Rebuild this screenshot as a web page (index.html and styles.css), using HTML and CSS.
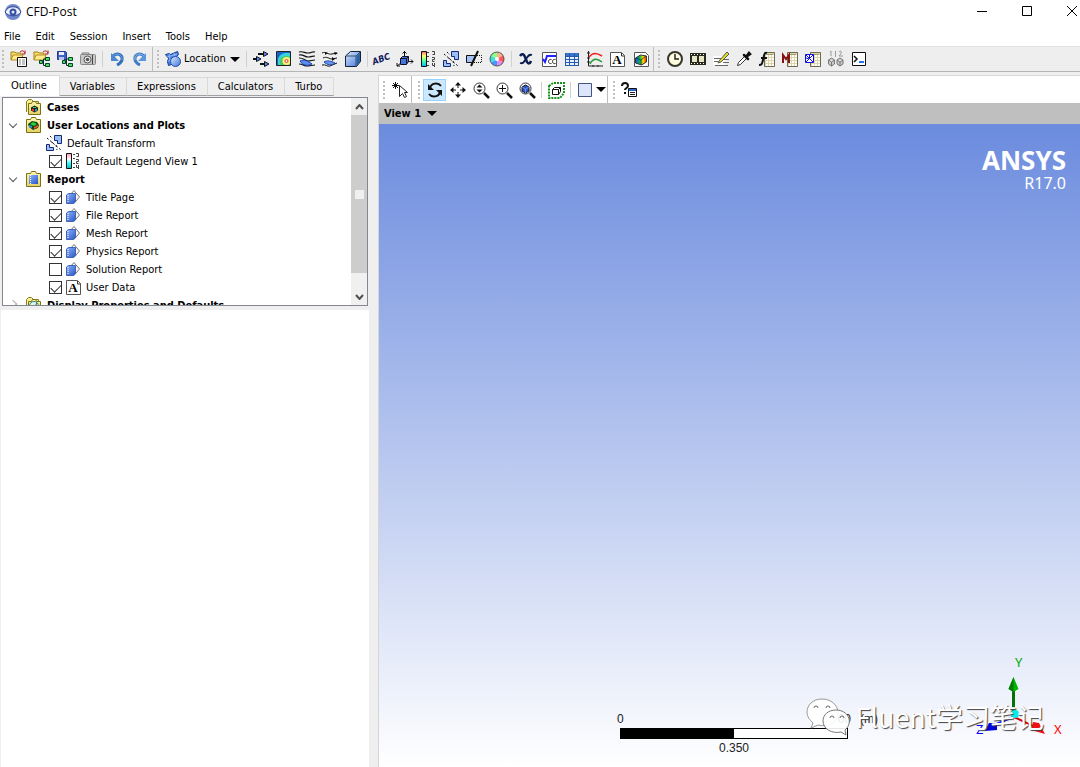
FILE: index.html
```html
<!DOCTYPE html>
<html lang="en">
<head>
	<meta charset="UTF-8">
	<title>CFD-Post</title>
	<link rel="stylesheet" href="styles.css">
</head>
<body>
<!-- shared icons -->
<svg class="sprite">
	<defs>
		<linearGradient id="gBlue" x1="0" y1="0" x2="1" y2="1"><stop offset="0" stop-color="#dcebff"/><stop offset="1" stop-color="#3f73d8"/></linearGradient>
		<linearGradient id="gBook" x1="0" y1="0" x2="1" y2="1"><stop offset="0" stop-color="#8fb4ff"/><stop offset="1" stop-color="#2a55c4"/></linearGradient>
		<linearGradient id="gFolder" x1="0" y1="0" x2="0" y2="1"><stop offset="0" stop-color="#fff9b0"/><stop offset="1" stop-color="#e2d06a"/></linearGradient>
		<linearGradient id="gBar" x1="0" y1="0" x2="0" y2="1"><stop offset="0" stop-color="#f66"/><stop offset=".3" stop-color="#ff7"/><stop offset=".6" stop-color="#5f9"/><stop offset="1" stop-color="#0bf"/></linearGradient>
		<linearGradient id="gBar2" x1="0" y1="0" x2="0" y2="1"><stop offset="0" stop-color="#f9a"/><stop offset=".4" stop-color="#fff"/><stop offset=".6" stop-color="#4ff"/><stop offset="1" stop-color="#0bb"/></linearGradient>
		<linearGradient id="gRain" x1="0" y1="0" x2="1" y2="0"><stop offset="0" stop-color="#24f"/><stop offset=".4" stop-color="#0b4"/><stop offset=".7" stop-color="#fd0"/><stop offset="1" stop-color="#e20"/></linearGradient>
	</defs>
	<symbol id="openfolder" viewBox="0 0 18 18">
		<path d="M1 10V2h4l1 1h5v2" fill="#f7dc6f" stroke="#a8801a"/><path d="M1 10l2-5h10l-2 5z" fill="#ffeb8e" stroke="#b58b1e"/>
		<path d="M10 2c2-2 4-1 5 1M15 .5V4h-3" fill="none" stroke="#b01818"/>
	</symbol>
	<symbol id="nodes" viewBox="0 0 18 18">
		<path d="M8 12h3M10.500 12V9h2M10.500 12v3.500h3" fill="none" stroke="#222"/>
		<path d="M6.500 10.500h3v3h-3zM12.500 7.500h4v3h-4zM12.500 13.500h4v3h-4z" fill="#4fe05a" stroke="#043"/>
	</symbol>
	<symbol id="load" viewBox="0 0 18 18"><use href="#openfolder"/><path d="M7.500 7.500h9v9h-9z" fill="#fff" stroke="#111"/><path d="M9 10h2m1 0h3m-6 2h2m1 0h3m-6 2h2m1 0h3" stroke="#888"/></symbol>
	<symbol id="loadstate" viewBox="0 0 18 18"><use href="#openfolder"/><use href="#nodes"/></symbol>
	<symbol id="save" viewBox="0 0 18 18"><path d="M1.500 1.500h8l1 1v7h-9z" fill="#3d62c4" stroke="#1d3b8c"/><path d="M3 2h5v3H3z" fill="#eef"/><path d="M3 7h5v3H3z" fill="#b8c8f0"/><use href="#nodes"/></symbol>
	<symbol id="camera" viewBox="0 0 18 18"><rect x="1.500" y="4.500" width="15" height="10" rx="1" fill="#c8c8c8" stroke="#888"/><path d="M3 4V3h7v1" stroke="#777" fill="#ddd"/><path d="M13.500 5v9" stroke="#444"/><circle cx="8.500" cy="9.500" r="3.500" fill="#eee" stroke="#555"/><circle cx="8.500" cy="9.500" r="1.800" fill="#555"/></symbol>
	<symbol id="undo" viewBox="0 0 18 18"><path d="M5 6c5-4 10-1 9 4-1 3-3 4-5 5" fill="none" stroke="#336fbd" stroke-width="3"/><path d="M5 6c5-4 10-1 9 4" fill="none" stroke="#6ca7e5"/><path d="M3 3v8h8z" fill="#4c88d2"/></symbol>
	<symbol id="redo" viewBox="0 0 18 18"><path d="M13 6C8 2 3 5 4 10c1 3 3 4 5 5" fill="none" stroke="#3f7cc8" stroke-width="3"/><path d="M13 6C8 2 3 5 4 10" fill="none" stroke="#8bbcf0"/><path d="M15 3v8H7z" fill="#5c96dc"/></symbol>
	<symbol id="location" viewBox="0 0 18 18"><path d="M1.500 4.500l4-1 1 1 7-3 1 3-2 2 1 6-9 3-1-4 1-3z" fill="#4a82e4" stroke="#123a9a"/><path d="M3 7l10-3M5 4l2 10M10 3l2 8M4 11l9-3" stroke="#a9ccff" stroke-width=".7"/><circle cx="11.500" cy="11.500" r="5" fill="url(#gBlue)" stroke="#1d49ac"/></symbol>
	<symbol id="vector" viewBox="0 0 18 18"><path d="M6 4h7M1 9h6M8 14h6" stroke="#111" stroke-width="2"/><path d="M11.500 1.500L16 4l-4.500 2.500zM4.500 6.500L9 9l-4.500 2.500zM12.500 11.500L17 14l-4.500 2.500z" fill="#58f" stroke="#111"/></symbol>
	<symbol id="contour" viewBox="0 0 18 18"><path d="M2 2h14v14H2z" fill="#1b66c4"/><path d="M3 16V9c1-4 5-6 8-6h5v13z" fill="#35d3dc"/><path d="M5 16v-6c1-3 4-4 6-4 4 0 5 2 5 5v5z" fill="#4cc95f"/><circle cx="11.500" cy="11" r="4" fill="#f9f07c"/><circle cx="11.500" cy="11" r="1.500" fill="#fff" stroke="#e33"/><path d="M1.500 1.500h14v14h-14z" fill="none" stroke="#222"/></symbol>
	<symbol id="stream" viewBox="0 0 18 18"><path d="M1 2c5-1 5 1 9 1s4-2 7-1M1 5c5-1 5 2 9 2s4-1 7-1M1 8c5 0 5 2 9 3 3 0 4-1 7-1M1 14c4 0 5 2 8 2s5-1 8-1" stroke="#111" fill="none" stroke-width="1.200"/><path d="M2 11c4-2 8 0 12 3-4 2-9 2-12-3z" fill="#5b8cf0" stroke="#1746aa"/></symbol>
	<symbol id="particle" viewBox="0 0 18 18"><path d="M1 3c4-2 6 2 10 1l5-1M2 8c4-2 6 1 9 1l5-1M1 15c4-1 5 2 8 1l7-3" stroke="#111" fill="none"/><path d="M4 2l3 1-3 2zM13 2l4 1-3 2zM11 7l3 2-3 2z" fill="#111"/><path d="M3 12c3-2 7-1 11 1-3 3-8 2-11-1z" fill="#6593f0" stroke="#1746aa"/></symbol>
	<symbol id="volume" viewBox="0 0 18 18"><path d="M1.500 6l5-4.500h10v10l-4 5h-11z" fill="url(#gBlue)" stroke="#123" stroke-linejoin="round"/><path d="M2 6h10v11M12 6l4-4" fill="none" stroke="#356"/><path d="M12.500 6.500l3.500-4v9l-3.500 4z" fill="#2d62a8"/></symbol>
	<symbol id="coord" viewBox="0 0 18 18"><path d="M8.500 1v6M11 11.500h6M5 13l-4 3M6.500 3.500l2-2 2 2M15 9.500l2 2-2 2M1 13v3h3" stroke="#111" fill="none"/><path d="M4.500 8.500l2-2h6v5l-2 3h-6z" fill="#4774dd" stroke="#112"/><path d="M4.500 8.500h6v5M10.500 8.500l2-2" fill="none" stroke="#112"/></symbol>
	<symbol id="legend" viewBox="0 0 18 18"><path d="M2.500 1.500h5v15h-5z" fill="url(#gBar)" stroke="#111"/><path d="M8 2.500h2M8 6.500h2M8 11.500h2M8 15.500h2M13 1.500h2.500v3h-2m2 0V5M13 7.500h2.500v2h-2v2h2M13.500 13v2.500h2.500M15.500 13v4" stroke="#444" fill="none"/></symbol>
	<symbol id="legend2" viewBox="0 0 18 18"><path d="M1.500 1.500h5v15h-5z" fill="url(#gBar2)" stroke="#111"/><path d="M8 2.500h2M8 6.500h2M8 11.500h2M8 15.500h2M11 1.500h2.500v3h-2m2 0V5M11 7.500h2.500v2h-2v2h2M11.500 13v2.500H14M13.500 13v4" stroke="#444" fill="none"/></symbol>
	<symbol id="transform" viewBox="0 0 18 18"><path d="M9.500 1.500h7v8h-4v-3h-3zM1.500 10.500h3v3h4v3h-7z" fill="#9dbdf5" stroke="#112b78"/><path d="M2 4l14 12M8 9l-3-2M5 2l3 3M11 11l1 5" stroke="#111" stroke-dasharray="2 2"/></symbol>
	<symbol id="clip" viewBox="0 0 18 18"><path d="M1.500 5.500h9l-3 7h-6z" fill="#a4c1f7" stroke="#111"/><path d="M12 5.500h4.500v7H9" fill="none" stroke="#111" stroke-dasharray="1 1"/><path d="M13 1L6 16" stroke="#111" stroke-width="2"/></symbol>
	<symbol id="wheel" viewBox="0 0 18 18"><path d="M9 9V2a7 7 0 0 1 6 3.500z" fill="#ffb08a"/><path d="M9 9l6-3.500a7 7 0 0 1 0 7z" fill="#f55"/><path d="M9 9l6 3.500A7 7 0 0 1 9 16z" fill="#e38af0"/><path d="M9 9v7a7 7 0 0 1-6-3.500z" fill="#49f"/><path d="M9 9l-6 3.500a7 7 0 0 1 0-7z" fill="#4dd"/><path d="M9 9L3 5.500A7 7 0 0 1 9 2z" fill="#8f8"/><circle cx="9" cy="9" r="2" fill="#fff"/><circle cx="9" cy="9" r="7" fill="none" stroke="#555"/></symbol>
	<symbol id="vars" viewBox="0 0 18 18"><path d="M3 6c2-3 4-2 5 1l2 5c1 2 3 2 4-1" fill="none" stroke="#0b1d50" stroke-width="2.500"/><path d="M15 5c-3-1-4 1-6 4s-3 5-6 4" fill="none" stroke="#0b1d50" stroke-width="1.800"/></symbol>
	<symbol id="expr" viewBox="0 0 18 18"><path d="M2.500 2.500h14v14h-14z" fill="#fff" stroke="#555"/><path d="M3 9l2 3 2-6h9" fill="none" stroke="#22f" stroke-width="2"/><path d="M11.500 9.500c-4-1-4 5 0 4M15.500 9.500c-4-1-4 5 0 4" stroke="#222" fill="none"/></symbol>
	<symbol id="table" viewBox="0 0 18 18"><path d="M2 3h14v13H2z" fill="#e8f1ff"/><path d="M2 3h14v3H2z" fill="#3b74cf"/><path d="M2.500 3v13M6.500 3v13M11.500 3v13M15.500 3v13M2 6.500h14M2 9.500h14M2 12.500h14M2 15.500h14" stroke="#2459ac"/></symbol>
	<symbol id="chart" viewBox="0 0 18 18"><path d="M2.500 1v15H17M1 3h3M1 8h3M1 12h3M7 15v2M12 15v2" stroke="#222" fill="none"/><path d="M3 7c4-5 8-4 13-1" stroke="#e22" fill="none" stroke-width="1.500"/><path d="M4 14c3-6 7-6 12-2" stroke="#293" fill="none" stroke-width="1.500"/></symbol>
	<symbol id="textnote" viewBox="0 0 18 18"><path d="M1.500 2.500h11l3 3v11h-14z" fill="#fff" stroke="#555"/><path d="M12.500 3v3h3" fill="none" stroke="#333"/><text x="8" y="14" text-anchor="middle" class="glyph">A</text></symbol>
	<symbol id="figure" viewBox="0 0 18 18"><path d="M2.500 2.500h11l3 3v11h-14z" fill="#fff" stroke="#555"/><path d="M3.500 8l5-3 6 1v6l-5 3-6-2z" fill="url(#gRain)" stroke="#333"/><path d="M4 8l5 2 5-4M9 10v5" fill="none" stroke="#123" stroke-width=".7"/></symbol>
	<symbol id="clock" viewBox="0 0 18 18"><circle cx="9" cy="9" r="7" fill="#fffce0" stroke="#37352a" stroke-width="2"/><path d="M9 4v5h4" fill="none" stroke="#222" stroke-width="1.500"/></symbol>
	<symbol id="film" viewBox="0 0 18 18"><path d="M1 3h16v12H1z" fill="#2a2920"/><path d="M3 6h5v6H3zM10 6h5v6h-5z" fill="#e5e5c5"/><path d="M2 4.500h14M2 13.500h14" stroke="#fff" stroke-dasharray="1 2"/></symbol>
	<symbol id="edit" viewBox="0 0 18 18"><path d="M1 6h12v9H1z" fill="#fff"/><path d="M2 8.500h7M2 11.500h4M11 9.500h6M11 12.500h6M3 15.500h13" stroke="#666"/><path d="M7 11l8-9 2 2-8 8-3 1z" fill="#e3dc22" stroke="#555"/></symbol>
	<symbol id="probe" viewBox="0 0 18 18"><path d="M2.500 15.500l1-3 6-6 2 2-6 6z" fill="#fff" stroke="#333"/><path d="M9 5l4 4M11 7l3-4 1 1z" stroke="#111" stroke-width="2.500" stroke-linecap="round" fill="#111"/></symbol>
	<symbol id="calc" viewBox="0 0 18 18"><path d="M6 2h11v15H6z" fill="#ddd6aa"/><path d="M6.500 2.500h10v14h-10z" fill="none" stroke="#6f6a4d"/><path d="M8 6h8M8 9h8M8 12h8M8 15h8" stroke="#fff" stroke-width="2" stroke-dasharray="2 1"/><path d="M8 4.500h7" stroke="#a49c70"/></symbol>
	<symbol id="fcalc" viewBox="0 0 18 18"><use href="#calc"/><path d="M9 3C6 2 6 6 5 10s-1 5-4 5M3 8h6" fill="none" stroke="#111" stroke-width="2"/></symbol>
	<symbol id="mcalc" viewBox="0 0 18 18"><use href="#calc"/><path d="M2 13V5l3 4 3-4v8" fill="none" stroke="#811" stroke-width="2"/></symbol>
	<symbol id="gcalc" viewBox="0 0 18 18"><use href="#calc"/><path d="M1.500 4.500h8v8h-8z" fill="#fff" stroke="#11d"/><path d="M2 5l7 7M9 5l-4 4-3-1M5 9l-3 3M5.500 5v4" fill="none" stroke="#11d"/></symbol>
	<symbol id="compare" viewBox="0 0 18 18"><path d="M3 2l1-1v5M12 2c2-2 4 0 0 4h4M8.500 1v6" fill="none" stroke="#999"/><path d="M1.500 10l3-2 3 2v4l-3 2-3-2zm0 0l3 2 3-2m-3 2v4M10 10l3-2 3 2v4l-3 2-3-2zm0 0l3 2 3-2m-3 2v4" fill="#ccc" stroke="#777"/></symbol>
	<symbol id="console" viewBox="0 0 18 18"><path d="M2.500 2.500h13v13h-13z" fill="#fff" stroke="#111"/><path d="M4 6l3 3-3 3" stroke="#111" fill="none" stroke-width="1.500"/><path d="M9 12h5" stroke="#27e" stroke-width="2"/></symbol>
	<symbol id="pick" viewBox="0 0 18 18"><path d="M8.500 4.500v11l3-3 2 4 2-1-2-4h3z" fill="#fff" stroke="#222"/><path d="M4.500 1v7M1 4.500h7M2 2l5 5M7 2L2 7" stroke="#111"/></symbol>
	<symbol id="rotate" viewBox="0 0 18 18"><path d="M4 7c1-5 8-6 11-2M14 11c-1 5-8 6-11 2" fill="none" stroke="#111" stroke-width="2"/><path d="M2 3v6h6zM16 15V9h-6z" fill="#111"/></symbol>
	<symbol id="pan" viewBox="0 0 18 18"><path d="M9 3v4M9 11v4M3 9h4M11 9h4" stroke="#111"/><path d="M9 1l3 3.500H6zM9 17l3-3.500H6zM1 9l3.500-3v6zM17 9l-3.500-3v6z" fill="#111"/></symbol>
	<symbol id="lens" viewBox="0 0 18 18"><circle cx="7.500" cy="7.500" r="5.500" fill="#fff" stroke="#333"/><path d="M12 12l5 5" stroke="#111" stroke-width="2.500"/></symbol>
	<symbol id="zoom" viewBox="0 0 18 18"><use href="#lens"/><path d="M7.500 3.500l3 3h-6zM7.500 11.500l3-3h-6z" fill="#111"/></symbol>
	<symbol id="zoombox" viewBox="0 0 18 18"><use href="#lens"/><path d="M7.500 4v7M4 7.500h7" stroke="#111"/></symbol>
	<symbol id="fit" viewBox="0 0 18 18"><use href="#lens"/><path d="M4 6l3.500-2L11 6v4l-3.500 2L4 10z" fill="#2b57c6" stroke="#112"/><path d="M4 6l3.500 2L11 6M7.500 8v4" fill="none" stroke="#9bf" stroke-width=".6"/></symbol>
	<symbol id="highlight" viewBox="0 0 18 18"><path d="M2 5l4-3h11v10l-4 5H2z" fill="none" stroke="#16931b" stroke-width="2" stroke-dasharray="2 1"/><path d="M5.500 8.500l2-2h6v4l-2 3h-6zM5.500 8.500h6v5M11.500 8.500l2-2" fill="#fff" stroke="#111"/></symbol>
	<symbol id="viewport" viewBox="0 0 18 18"><path d="M2.500 2.500h13v13h-13z" fill="#dce5fa" stroke="#455580"/></symbol>
	<symbol id="help" viewBox="0 0 18 18"><path d="M2 5c0-4 6-4 6 0 0 2-3 2-3 4M5 11v2" fill="none" stroke="#111" stroke-width="2"/><path d="M8.500 7.500h8v8h-8z" fill="#fff" stroke="#111"/><path d="M9 8h7v2H9z" fill="#2a63c8"/><path d="M10 11.500h5M10 13.500h5" stroke="#222"/></symbol>
	<symbol id="folder" viewBox="0 0 18 18"><path d="M1.500 14V3.500l2-2h3l2 2h5V5" fill="#f5ee92" stroke="#8a7d1c"/><path d="M3.500 5.500h3l1-2h3l1 2h4v11h-12z" fill="url(#gFolder)" stroke="#7c7012"/></symbol>
	<symbol id="cases" viewBox="0 0 18 18"><use href="#folder"/><path d="M6 9.500l3.500-2 3.500 2v3l-3.500 2-3.500-2z" fill="#222"/><path d="M7 10.500l2 1v2l-2-1z" fill="#f34"/><path d="M12 10.500l-2 1v2l2-1z" fill="#2ad"/><path d="M8 9.500h3" stroke="#2d4"/></symbol>
	<symbol id="plots" viewBox="0 0 18 18"><path d="M1.500 3.500h4l1-2h4l1 2h4v13h-14z" fill="url(#gFolder)" stroke="#7c7012"/><path d="M3 8l4-3 5 1 2 3-1 3-5 2-4-3z" fill="#174017"/><path d="M5 8l3-2 4 2-3 2z" fill="#28d03c"/><path d="M9 11l4-2v2l-4 2z" fill="#e52"/><path d="M4 9l3 1v2l-3-1z" fill="#29e"/></symbol>
	<symbol id="report" viewBox="0 0 18 18"><path d="M1.500 3.500h4l1-2h4l1 2h4v13h-14z" fill="url(#gFolder)" stroke="#7c7012"/><path d="M4 5h9v9H4z" fill="url(#gBook)"/><path d="M5.500 5v9" stroke="#fff" stroke-dasharray="1 1"/></symbol>
	<symbol id="page" viewBox="0 0 18 18"><path d="M4 8l5-5.500 5.500 6.500L9 15.500" fill="#f6f6f6" stroke="#777"/><path d="M1.500 7l2-1.500h7v8l-2 2h-7z" fill="url(#gBook)" stroke="#3d65ba"/><path d="M3 7v8" stroke="#fff" stroke-dasharray="1 1"/></symbol>
	<symbol id="display" viewBox="0 0 18 18"><use href="#folder"/><circle cx="9" cy="10" r="4.500" fill="#dff3f0" stroke="#288"/><path d="M7 10l2 2 3-5" fill="none" stroke="#253"/></symbol>
</svg>

<header class="titlebar">
	<svg class="logo" viewBox="0 0 18 18"><circle cx="9" cy="9" r="8" fill="#6f88cc"/><path d="M1 9c3-7 13-7 16 0-3 5-13 5-16 0z" fill="#eef2ff" stroke="#2c428c"/><circle cx="9" cy="9" r="3.500" fill="#33509f"/><circle cx="9" cy="9" r="1.500" fill="#dfe6ff"/></svg>
	<h1>CFD-Post</h1>
	<div class="winbtns">
		<button aria-label="Minimize"><svg viewBox="0 0 12 12"><path d="M1 5.500h10"/></svg></button>
		<button aria-label="Maximize"><svg viewBox="0 0 12 12"><path d="M1.500 .5h9v9h-9z"/></svg></button>
		<button aria-label="Close"><svg viewBox="0 0 12 12"><path d="M1 0l10 10M11 0L1 10"/></svg></button>
	</div>
</header>

<nav class="menu">
	<button>File</button>
	<button>Edit</button>
	<button>Session</button>
	<button>Insert</button>
	<button>Tools</button>
	<button>Help</button>
</nav>

<div class="toolbar">
	<div class="group">
		<button class="tool" aria-label="Load results"><svg><use href="#load"/></svg></button>
		<button class="tool" aria-label="Load state"><svg><use href="#loadstate"/></svg></button>
		<button class="tool" aria-label="Save state"><svg><use href="#save"/></svg></button>
		<button class="tool" aria-label="Save picture"><svg><use href="#camera"/></svg></button>
		<i class="sep"></i>
		<button class="tool" aria-label="Undo"><svg><use href="#undo"/></svg></button>
		<button class="tool" aria-label="Redo"><svg><use href="#redo"/></svg></button>
	</div>
	<div class="group">
		<button class="location"><svg><use href="#location"/></svg>Location<i class="caret"></i></button>
		<i class="sep"></i>
		<button class="tool" aria-label="Vector"><svg><use href="#vector"/></svg></button>
		<button class="tool" aria-label="Contour"><svg><use href="#contour"/></svg></button>
		<button class="tool" aria-label="Streamline"><svg><use href="#stream"/></svg></button>
		<button class="tool" aria-label="Particle track"><svg><use href="#particle"/></svg></button>
		<button class="tool" aria-label="Volume rendering"><svg><use href="#volume"/></svg></button>
		<i class="sep"></i>
		<button class="tool" aria-label="Text"><span class="abc">ABC</span></button>
		<button class="tool" aria-label="Coordinate frame"><svg><use href="#coord"/></svg></button>
		<button class="tool" aria-label="Legend"><svg><use href="#legend"/></svg></button>
		<button class="tool" aria-label="Instance transform"><svg><use href="#transform"/></svg></button>
		<button class="tool" aria-label="Clip plane"><svg><use href="#clip"/></svg></button>
		<button class="tool" aria-label="Color map"><svg><use href="#wheel"/></svg></button>
		<i class="sep"></i>
		<button class="tool" aria-label="Variable"><svg><use href="#vars"/></svg></button>
		<button class="tool" aria-label="Expression"><svg><use href="#expr"/></svg></button>
		<button class="tool" aria-label="Table"><svg><use href="#table"/></svg></button>
		<button class="tool" aria-label="Chart"><svg><use href="#chart"/></svg></button>
		<button class="tool" aria-label="Comment"><svg><use href="#textnote"/></svg></button>
		<button class="tool" aria-label="Figure"><svg><use href="#figure"/></svg></button>
	</div>
	<div class="group last">
		<button class="tool" aria-label="Timestep selector"><svg><use href="#clock"/></svg></button>
		<button class="tool" aria-label="Animation"><svg><use href="#film"/></svg></button>
		<button class="tool" aria-label="Quick editor"><svg><use href="#edit"/></svg></button>
		<button class="tool" aria-label="Probe"><svg><use href="#probe"/></svg></button>
		<button class="tool" aria-label="Function calculator"><svg><use href="#fcalc"/></svg></button>
		<button class="tool" aria-label="Macro calculator"><svg><use href="#mcalc"/></svg></button>
		<button class="tool" aria-label="Mesh calculator"><svg><use href="#gcalc"/></svg></button>
		<button class="tool" aria-label="Case comparison"><svg><use href="#compare"/></svg></button>
		<button class="tool" aria-label="Command editor"><svg><use href="#console"/></svg></button>
	</div>
</div>

<main class="work">
	<section class="side">
		<div class="tabs">
			<button class="tab active">Outline</button>
			<button class="tab">Variables</button>
			<button class="tab">Expressions</button>
			<button class="tab">Calculators</button>
			<button class="tab">Turbo</button>
		</div>
		<div class="treebox">
			<ul class="tree">
				<li class="top"><i class="arrow none"></i><svg><use href="#cases"/></svg>Cases</li>
				<li class="top"><i class="arrow"></i><svg><use href="#plots"/></svg>User Locations and Plots</li>
				<li class="bare"><svg><use href="#transform"/></svg>Default Transform</li>
				<li><input type="checkbox" id="c0" checked><label for="c0"><svg><use href="#legend2"/></svg>Default Legend View 1</label></li>
				<li class="top"><i class="arrow"></i><svg><use href="#report"/></svg>Report</li>
				<li><input type="checkbox" id="c1" checked><label for="c1"><svg><use href="#page"/></svg>Title Page</label></li>
				<li><input type="checkbox" id="c2" checked><label for="c2"><svg><use href="#page"/></svg>File Report</label></li>
				<li><input type="checkbox" id="c3" checked><label for="c3"><svg><use href="#page"/></svg>Mesh Report</label></li>
				<li><input type="checkbox" id="c4" checked><label for="c4"><svg><use href="#page"/></svg>Physics Report</label></li>
				<li><input type="checkbox" id="c5"><label for="c5"><svg><use href="#page"/></svg>Solution Report</label></li>
				<li><input type="checkbox" id="c6" checked><label for="c6"><svg><use href="#textnote"/></svg>User Data</label></li>
				<li class="top"><i class="arrow right"></i><svg><use href="#display"/></svg>Display Properties and Defaults</li>
			</ul>
			<div class="scroll">
				<button aria-label="Scroll up"><svg viewBox="0 0 9 6"><path d="M1 5l3.500-4L8 5"/></svg></button>
				<div class="thumb"><i></i></div>
				<button aria-label="Scroll down"><svg viewBox="0 0 9 6"><path d="M1 1l3.500 4L8 1"/></svg></button>
			</div>
		</div>
		<div class="details"></div>
	</section>

	<section class="viewer">
		<div class="viewtools">
			<div class="group">
				<button class="tool" aria-label="Select"><svg><use href="#pick"/></svg></button>
			</div>
			<div class="group">
				<button class="tool on" aria-label="Rotate"><svg><use href="#rotate"/></svg></button>
				<button class="tool" aria-label="Pan"><svg><use href="#pan"/></svg></button>
				<button class="tool" aria-label="Zoom"><svg><use href="#zoom"/></svg></button>
				<button class="tool" aria-label="Zoom box"><svg><use href="#zoombox"/></svg></button>
				<button class="tool" aria-label="Fit view"><svg><use href="#fit"/></svg></button>
				<i class="sep"></i>
				<button class="tool" aria-label="Highlighting"><svg><use href="#highlight"/></svg></button>
				<i class="sep"></i>
				<button class="layout" aria-label="Viewport layout"><svg><use href="#viewport"/></svg><i class="caret"></i></button>
			</div>
			<div class="group last">
				<button class="tool" aria-label="Viewer help"><svg><use href="#help"/></svg></button>
			</div>
		</div>
		<button class="viewname">View 1<i class="caret"></i></button>
		<div class="canvas">
			<div class="brand">
				<strong>ANSYS</strong>
				<span>R17.0</span>
			</div>
			<div class="ruler">
				<div class="ends"><span>0</span><span>0.700</span><span class="unit">(m)</span></div>
				<div class="bar"></div>
				<div class="mid">0.350</div>
			</div>
			<svg class="triad" viewBox="0 0 100 90">
				<path d="M43 64L22 73" stroke="#00f" stroke-width="2"/><path d="M19 70h8v7l-12 1z" fill="#00d"/>
				<path d="M44 64l21 10" stroke="#d00" stroke-width="2"/><path d="M63 69l6 1 6 11-14-4z" fill="#e11"/>
				<path d="M43.500 62V34" stroke="#087008" stroke-width="3"/><path d="M43.500 24l5 12-5 3-5-3z" fill="#00b400"/><path d="M43.500 24v15l-5-3z" fill="#087a08"/>
				<circle cx="45" cy="61" r="4" fill="#0ee"/>
				<text x="45" y="14" fill="#0a0">Y</text><text x="84" y="81" fill="#f00">X</text><text x="6" y="81" fill="#00f">Z</text>
			</svg>
			<div class="mark">
				<svg viewBox="0 0 46 40">
					<path d="M17 2C8 2 2 8 2 15c0 5 3 8 6 11l-2 5 7-3c12 3 20-4 20-12S26 2 17 2z" fill="#fff" stroke="#999"/>
					<path d="M9 11a2 2 0 0 1 4 0M21 11a2 2 0 0 1 4 0" fill="none" stroke="#666"/>
					<path d="M31 13c-8 0-13 5-13 11 0 8 9 13 18 11l5 3-1-5c9-8 3-20-9-20z" fill="#fff" fill-opacity=".9" stroke="#777"/>
					<path d="M25 21a2 2 0 0 1 4 0M35 21a2 2 0 0 1 4 0" fill="none" stroke="#666"/>
				</svg>
				<span>Fluent学习笔记</span>
			</div>
		</div>
	</section>
</main>
</body>
</html>
```
FILE: styles.css
```css
*{margin: 0;padding: 0;box-sizing: border-box;}
body{
	min-height: 100vh;
	display: flex;
	flex-direction: column;
	background: #efefef;
	color: #000;
	font: 11px/18px "DejaVu Sans Condensed", "Noto Sans", sans-serif;
}
ul{list-style: none;}
button{
	border: 0;
	background: none;
	color: inherit;
	font: inherit;
}
.sprite{
	position: absolute;
	width: 0;
	height: 0;
}
.glyph{font: bold 13px "Liberation Serif", serif;}

/* title + menu */
.titlebar{
	display: flex;
	align-items: center;
	height: 24px;
	padding-left: 4px;
	background: #fff;
}
.logo{
	width: 18px;
	height: 18px;
}
.titlebar h1{
	margin-left: 4px;
	font: 12px/18px "Open Sans", sans-serif;
}
.winbtns{
	display: flex;
	gap: 33px;
	margin-left: auto;
	padding-right: 2px;
}
.winbtns button{
	width: 12px;
	height: 12px;
}
.winbtns svg{
	display: block;
	width: 12px;
	height: 12px;
	fill: none;
	stroke: #000;
}
.menu{
	display: flex;
	gap: 15px;
	height: 22px;
	padding: 3px 4px 0;
	background: #fff;
}

/* toolbars */
.toolbar{
	display: flex;
	height: 26px;
	border-top: 1px solid #e2e2e2;
	border-bottom: 1px solid #b4b4b4;
	background: #eee;
}
.group{
	display: flex;
	align-items: center;
	padding-right: 1px;
	border-right: 1px solid #bdbdbd;
	margin-right: 2px;
}
.group.last{border-right: 0;}
.group:before{
	content: '';
	width: 2px;
	height: 18px;
	margin: 0 3px 0 2px;
	background: repeating-linear-gradient(#c0c0c0 0 2px, transparent 2px 4px);
}
.tool{
	display: flex;
	align-items: center;
	justify-content: center;
	width: 23px;
	height: 22px;
}
.group svg{
	width: 18px;
	height: 18px;
}
.on{
	background: #cce8ff;
	border: 1px solid #99d1ff;
}
.sep{
	width: 1px;
	height: 16px;
	margin: 0 2px 0 3px;
	background: #d0d0d0;
}
.caret{
	display: inline-block;
	border: 5px solid transparent;
	border-top-color: #000;
	border-bottom: 0;
}
.location{
	display: flex;
	align-items: center;
	gap: 2px;
	width: 81px;
	padding-left: 2px;
	white-space: nowrap;
}
.location .caret{margin-left: 2px;}
.abc{
	color: #14205c;
	font: italic bold 9px/12px "DejaVu Sans Condensed", sans-serif;
	transform: rotate(-20deg);
}

/* main area */
.work{
	flex: 1;
	display: flex;
	padding-top: 3px;
}
.side{
	display: flex;
	flex-direction: column;
	width: 35%;
	padding-right: 9px;
}
.tabs{
	display: flex;
	align-items: flex-end;
	height: 21px;
}
.tab{
	height: 19px;
	padding: 0 11px 0 10px;
	border: 1px solid #d9d9d9;
	border-left: 0;
	border-bottom-color: #a0a0a0;
}
.tab.active{
	height: 21px;
	padding: 0 12px 0 11px;
	border-bottom: 0;
	background: #fff;
}
.treebox{
	display: flex;
	height: 209px;
	margin: 1px 1px 4px 2px;
	border: 1px solid #828790;
	background: #fff;
	overflow: hidden;
}
.tree{
	flex: 1;
	overflow: hidden;
	padding-top: 1px;
}
.tree li{
	display: flex;
	align-items: center;
	height: 18px;
	padding-left: 46px;
	white-space: nowrap;
}
.tree svg{
	flex: none;
	width: 18px;
	height: 18px;
	margin: 0 3px 2px 0;
}
.tree li.top{
	padding-left: 5px;
	font-weight: bold;
}
.tree li.bare{padding-left: 42px;}
.tree .top svg,
.tree .bare svg{margin-right: 4px;}
.tree label{
	display: flex;
	align-items: center;
}
.tree input{
	appearance: none;
	position: relative;
	width: 13px;
	height: 13px;
	margin: 0 3px 2px 0;
	border: 1px solid #333;
	background: #fff;
}
.tree input:checked:after{
	content: '';
	position: absolute;
	top: 2px;
	left: 1px;
	width: 9px;
	height: 5px;
	border: solid #333;
	border-width: 0 0 1px 1px;
	transform: rotate(-45deg);
}
.arrow{
	width: 6px;
	height: 6px;
	margin: 0 9px 4px 2px;
	border: solid #555;
	border-width: 0 1px 1px 0;
	transform: rotate(45deg);
}
.arrow.right{
	border-color: #aaa;
	transform: rotate(-45deg);
}
.arrow.none{visibility: hidden;}
.scroll{
	display: flex;
	flex-direction: column;
	width: 16px;
	background: #f0f0f0;
}
.scroll button{
	height: 17px;
	line-height: 0;
}
.scroll button svg{
	width: 9px;
	height: 6px;
	fill: none;
	stroke: #505050;
	stroke-width: 2;
}
.thumb{
	display: flex;
	align-items: center;
	justify-content: center;
	height: 158px;
	margin-bottom: auto;
	background: #cdcdcd;
}
.thumb i{
	width: 9px;
	height: 9px;
	background: #f0f0f0;
}
.details{
	flex: 1;
	margin-left: 1px;
	background: #fff;
}

/* 3d viewer */
.viewer{
	flex: 1;
	display: flex;
	flex-direction: column;
	border-left: 1px solid #d5d5d5;
}
.viewtools{
	display: flex;
	height: 28px;
	border-top: 1px solid #d9d9d9;
	background: #fff;
}
.viewtools .group{padding-right: 0;}
.viewtools .group:before{margin: 0 3px 0 4px;}
.viewtools .last:before{margin: 0 2px 0 3px;}
.layout{
	display: flex;
	align-items: center;
	gap: 2px;
	padding: 0 1px 0 3px;
}
.viewname{
	height: 21px;
	padding-left: 5px;
	background: #bfbfbf;
	font-weight: bold;
	text-align: left;
}
.viewname .caret{margin: 0 0 1px 6px;}
.canvas{
	flex: 1;
	position: relative;
	background: linear-gradient(#6b8bde, #fff);
}
.brand{
	position: absolute;
	top: 22px;
	right: 14px;
	color: #fff;
	text-align: right;
}
.brand strong{
	display: block;
	font: bold 26px/29px "Noto Sans", sans-serif;
}
.brand span{
	display: block;
	font: 16px/16px "Noto Sans", sans-serif;
}
.ruler{
	position: absolute;
	right: 232px;
	bottom: 10px;
	width: 228px;
	color: #222;
	font: 12px/18px "Liberation Sans", sans-serif;
	text-align: center;
}
.ends{
	position: relative;
	display: flex;
	justify-content: space-between;
	margin: 0 -3px;
}
.unit{
	position: absolute;
	left: 100%;
	margin-left: 9px;
}
.bar{
	height: 11px;
	border: 1px solid #000;
	background: linear-gradient(90deg, #000 50%, #fff 50%);
}
.triad{
	position: absolute;
	right: 10px;
	bottom: 24px;
	width: 100px;
	height: 90px;
	font: 13px "Noto Sans", sans-serif;
}
.mark{
	position: absolute;
	right: 36px;
	bottom: 30px;
	display: flex;
	align-items: center;
	gap: 4px;
	color: #fff;
	font: 27px/40px "Noto Sans CJK SC", sans-serif;
	text-shadow: 1px 1px 1px #444;
	white-space: nowrap;
}
.mark svg{
	width: 46px;
	height: 40px;
}
```
